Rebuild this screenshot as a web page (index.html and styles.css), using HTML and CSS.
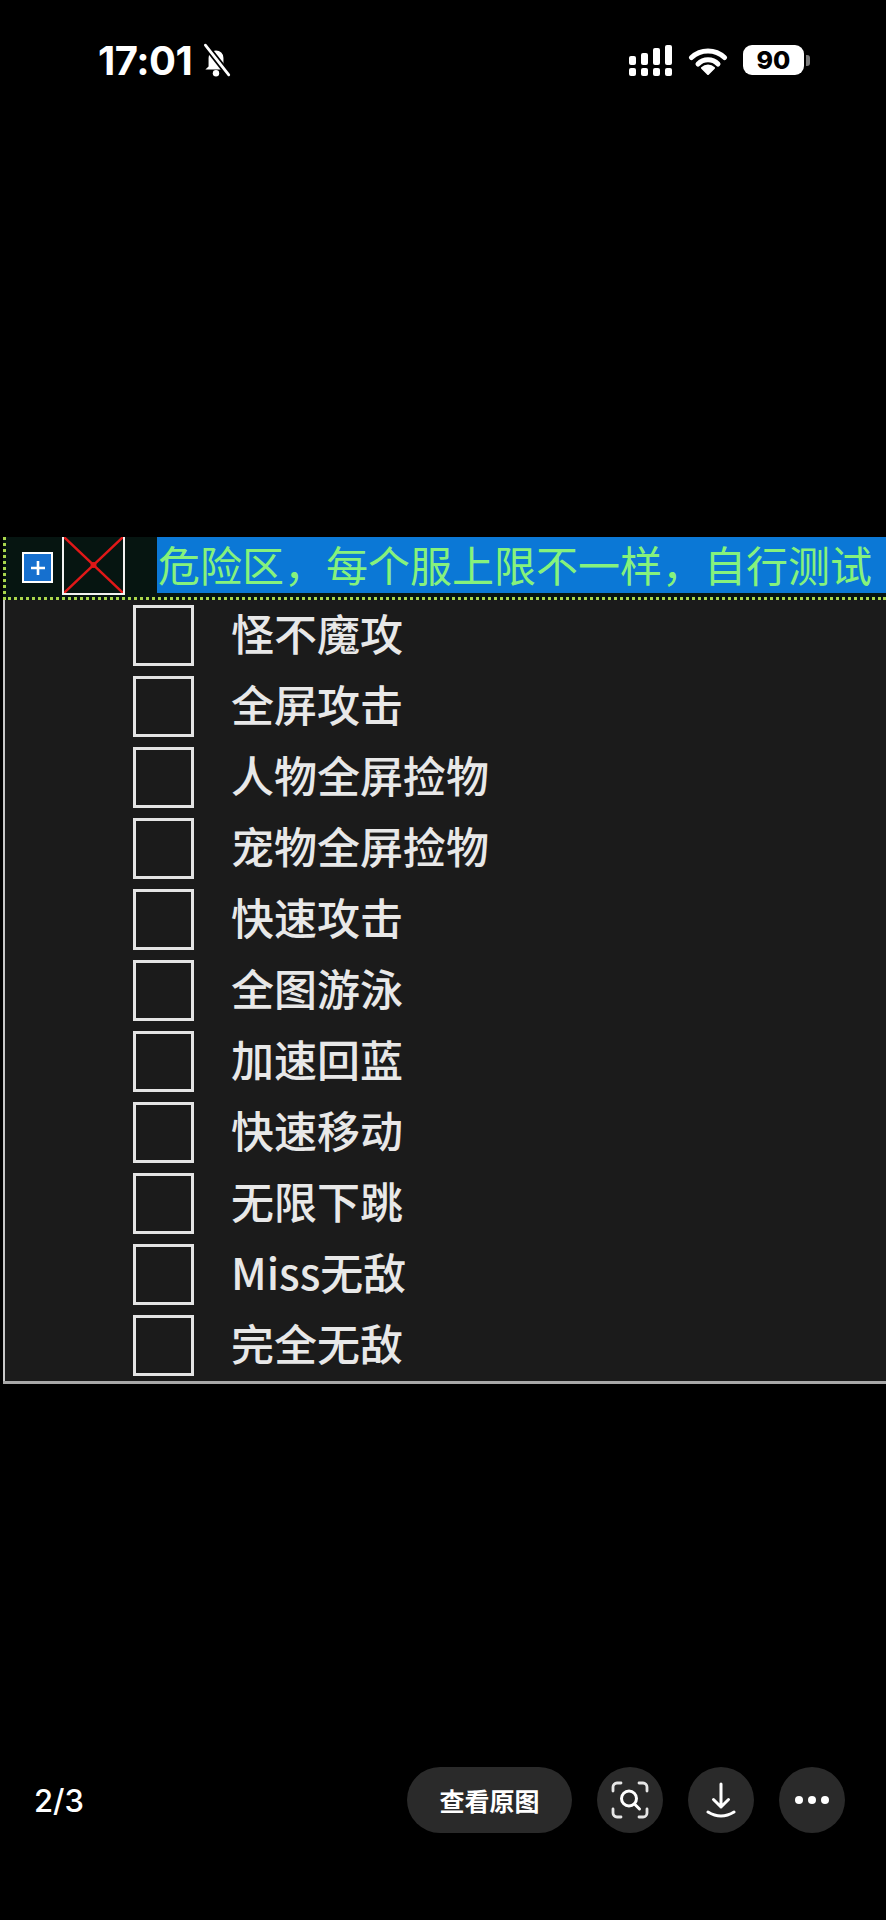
FILE: index.html
```html
<!DOCTYPE html>
<html lang="zh-CN">
<head>
    <meta charset="UTF-8">
    <meta name="viewport" content="width=device-width, initial-scale=1.0">
    <title>图片预览</title>
    <link rel="stylesheet" href="styles.css">
</head>
<body>
    <header class="status">
        <div class="status-left">
            <span class="clock">17:01</span>
            <!-- muted bell -->
            <svg class="bell" viewBox="0 0 30 32" width="32" height="34">
                <path d="M8 22 V14 a7 7 0 0 1 14 0 V22 l3 3 H5 z" fill="#fff"/>
                <circle cx="15" cy="28.5" r="3" fill="#fff"/>
                <line x1="5" y1="2" x2="27" y2="30" stroke="#000" stroke-width="6"/>
                <line x1="5" y1="2" x2="27" y2="30" stroke="#fff" stroke-width="2.6" stroke-linecap="round"/>
            </svg>
        </div>
        <div class="status-right">
            <svg class="signal" viewBox="0 0 44 31" width="44" height="31">
                <rect x="0" y="23" width="7" height="8" rx="2" fill="#fff"/>
                <rect x="12" y="23" width="7" height="8" rx="2" fill="#fff"/>
                <rect x="24" y="23" width="7" height="8" rx="2" fill="#fff"/>
                <rect x="36" y="23" width="7" height="8" rx="2" fill="#fff"/>
                <rect x="0" y="11" width="7" height="9" rx="2" fill="#fff"/>
                <rect x="12" y="8" width="7" height="12" rx="2" fill="#fff"/>
                <rect x="24" y="3" width="7" height="17" rx="2" fill="#fff"/>
                <rect x="36" y="0" width="7" height="20" rx="2" fill="#fff"/>
            </svg>
            <svg class="wifi" viewBox="0 0 40 30" width="40" height="30">
                <path d="M3.5 12.5 A24 24 0 0 1 36.5 12.5" fill="none" stroke="#fff" stroke-width="5" stroke-linecap="round"/>
                <path d="M10 19 A14 14 0 0 1 30 19" fill="none" stroke="#fff" stroke-width="5" stroke-linecap="round"/>
                <path d="M20 29 L14 23 A8.5 8.5 0 0 1 26 23 Z" fill="#fff" stroke="#fff" stroke-width="2" stroke-linejoin="round"/>
            </svg>
            <div class="battery"><span>90</span></div>
            <div class="battery-cap"></div>
        </div>
    </header>

    <main class="stage">
        <section class="panel">
            <div class="panel-head">
                <div class="head-tools">
                    <span class="expand">
                        <svg viewBox="0 0 20 20" width="20" height="20">
                            <path d="M10 3 V17 M3 10 H17" stroke="#fff" stroke-width="2.6"/>
                        </svg>
                    </span>
                    <span class="broken-img">
                        <svg viewBox="0 0 59 56" width="59" height="56" preserveAspectRatio="none">
                            <path d="M0 0 L59 56 M59 0 L0 56" stroke="#e01818" stroke-width="2.4"/>
                            <circle cx="29.5" cy="28" r="3" fill="#e01818"/>
                        </svg>
                    </span>
                </div>
                <div class="head-title">危险区，每个服上限不一样，自行测试</div>
            </div>

            <ul class="opt-list">
                <li class="opt"><span class="box"></span><span class="label">怪不魔攻</span></li>
                <li class="opt"><span class="box"></span><span class="label">全屏攻击</span></li>
                <li class="opt"><span class="box"></span><span class="label">人物全屏捡物</span></li>
                <li class="opt"><span class="box"></span><span class="label">宠物全屏捡物</span></li>
                <li class="opt"><span class="box"></span><span class="label">快速攻击</span></li>
                <li class="opt"><span class="box"></span><span class="label">全图游泳</span></li>
                <li class="opt"><span class="box"></span><span class="label">加速回蓝</span></li>
                <li class="opt"><span class="box"></span><span class="label">快速移动</span></li>
                <li class="opt"><span class="box"></span><span class="label">无限下跳</span></li>
                <li class="opt"><span class="box"></span><span class="label">Miss无敌</span></li>
                <li class="opt"><span class="box"></span><span class="label">完全无敌</span></li>
            </ul>
        </section>
    </main>

    <footer class="toolbar">
        <span class="counter">2/3</span>
        <div class="actions">
            <button class="pill">查看原图</button>
            <button class="round" aria-label="识图">
                <svg viewBox="0 0 40 40" width="40" height="40">
                    <path d="M3 11 V7 a4 4 0 0 1 4-4 H11 M29 3 H33 a4 4 0 0 1 4 4 V11 M37 29 V33 a4 4 0 0 1-4 4 H29 M11 37 H7 a4 4 0 0 1-4-4 V29" fill="none" stroke="#e6e6e6" stroke-width="2.8" stroke-linecap="round"/>
                    <circle cx="19" cy="18.5" r="7.5" fill="none" stroke="#fff" stroke-width="3"/>
                    <path d="M24.5 24 L29.5 29" stroke="#fff" stroke-width="3" stroke-linecap="round"/>
                </svg>
            </button>
            <button class="round" aria-label="下载">
                <svg viewBox="0 0 40 40" width="40" height="40">
                    <path d="M20 4 V27 M12.5 19.5 L20 27 L27.5 19.5" fill="none" stroke="#fff" stroke-width="3" stroke-linecap="round" stroke-linejoin="round"/>
                    <path d="M7 32 Q20 40 33 32" fill="none" stroke="#fff" stroke-width="3" stroke-linecap="round"/>
                </svg>
            </button>
            <button class="round" aria-label="更多">
                <svg viewBox="0 0 40 40" width="40" height="40">
                    <circle cx="7" cy="20" r="4" fill="#fff"/>
                    <circle cx="20" cy="20" r="4" fill="#fff"/>
                    <circle cx="33" cy="20" r="4" fill="#fff"/>
                </svg>
            </button>
        </div>
    </footer>
</body>
</html>
```

FILE: styles.css
```css
body {
    margin: 0;
    padding: 0;
    background-color: #000;
    color: #fff;
    font-family: Inter, "Noto Sans CJK SC", sans-serif;
    width: 886px;
    height: 1920px;
    overflow: hidden;
}

/* status bar */
.status {
    height: 120px;
    display: flex;
    justify-content: space-between;
    align-items: center;
    padding: 0 76px 0 98px;
}

.status-left {
    display: flex;
    align-items: center;
    gap: 8px;
}

.clock {
    font-size: 40px;
    font-weight: 700;
    letter-spacing: -0.5px;
}

.status-right {
    display: flex;
    align-items: center;
}

.signal {
    margin-right: 15px;
}

.wifi {
    margin-right: 15px;
}

.battery {
    width: 61px;
    height: 30px;
    border-radius: 9px;
    background: #fff;
    color: #000;
    display: flex;
    justify-content: center;
    align-items: center;
    font-size: 25px;
    font-weight: 800;
}

.battery-cap {
    width: 4px;
    height: 11px;
    margin-left: 2px;
    border-radius: 0 3px 3px 0;
    background: #7a7a7a;
}

/* the picture */
.stage {
    margin-top: 417px;
}

.panel {
    margin-left: 3px;
    background: #1b1b1b;
    border-bottom: 3px solid #a8a8a8;
}

.panel-head {
    display: flex;
    height: 60px;
    background: #061511;
    border-left: 3px dotted #a9d64c;
    border-bottom: 3px dotted #a9d64c;
}

.head-tools {
    width: 151px;
    flex-shrink: 0;
    display: flex;
    align-items: flex-start;
}

.expand {
    width: 31px;
    height: 31px;
    flex-shrink: 0;
    margin: 15px 0 0 16px;
    box-sizing: border-box;
    border: 2px solid #fff;
    background: #1670cf;
    display: flex;
    justify-content: center;
    align-items: center;
}

.broken-img {
    width: 63px;
    height: 58px;
    flex-shrink: 0;
    margin-left: 9px;
    box-sizing: border-box;
    border: 2px solid #f2f2f2;
    border-top: none;
    display: flex;
}

.head-title {
    flex: 1;
    height: 56px;
    line-height: 54px;
    padding-left: 1px;
    background: #0b78d6;
    color: #86f27c;
    font-family: "Noto Sans CJK SC", sans-serif;
    font-size: 42px;
    white-space: nowrap;
}

.opt-list {
    list-style: none;
    margin: 0;
    padding: 0;
    border-left: 2px solid #c9c9c9;
}

.opt {
    height: 71px;
    display: flex;
    align-items: center;
}

.box {
    width: 61px;
    height: 61px;
    flex-shrink: 0;
    margin-left: 128px;
    box-sizing: border-box;
    border: 3px solid #e4e4e4;
}

.label {
    margin-left: 37px;
    padding-bottom: 6px;
    font-family: "Noto Sans CJK SC", sans-serif;
    font-size: 43px;
    font-weight: 500;
    color: #e8e8e8;
    line-height: 1;
}

/* bottom bar */
.toolbar {
    margin-top: 383px;
    height: 66px;
    display: flex;
    align-items: center;
    padding: 0 41px 0 34px;
}

.counter {
    flex: 1;
    font-size: 31px;
    font-weight: 500;
}

.actions {
    display: flex;
    align-items: center;
    gap: 25px;
}

.actions button {
    border: none;
    background: #2a2a2a;
    color: #fff;
    padding: 0;
    display: flex;
    justify-content: center;
    align-items: center;
}

.pill {
    width: 165px;
    height: 66px;
    border-radius: 33px;
    font-family: "Noto Sans CJK SC", sans-serif;
    font-size: 25px;
    font-weight: 700;
}

.round {
    width: 66px;
    height: 66px;
    border-radius: 50%;
}
```
